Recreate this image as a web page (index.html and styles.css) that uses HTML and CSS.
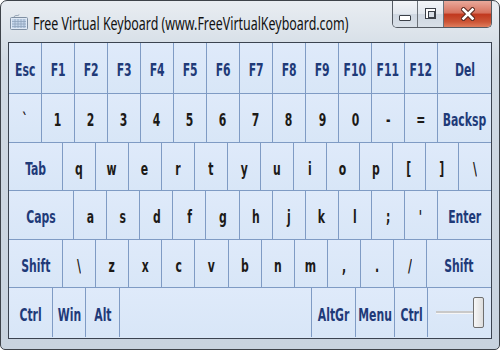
FILE: index.html
```html
<!DOCTYPE html>
<html>
<head>
<meta charset="utf-8">
<link rel="stylesheet" href="styles.css">
</head>
<body>
<div class="window">
  <div class="titlebar">
    <svg class="app-icon" width="18" height="16" viewBox="0 0 18 16">
      <rect x="0.5" y="3.5" width="17" height="12" rx="1" fill="#dfe9f5" stroke="#7f8fa3"/>
      <rect x="2" y="5" width="14" height="9" fill="#c4d5ea"/>
      <path d="M2 7.5h14M2 10h14M2 12.5h14M5 5v9M8 5v9M11 5v9M14 5v9" stroke="#8fa3bd" stroke-width="0.8"/>
      <path d="M4 3.5c0-2 2-2 3-2s2 0 2-1" fill="none" stroke="#7f8fa3" stroke-width="0.8"/>
    </svg>
    <div class="title"><span>Free Virtual Keyboard (www.FreeVirtualKeyboard.com)</span></div>
    <div class="caption">
      <div class="cbtn cmin"><div class="min-glyph"></div></div>
      <div class="cbtn cmax"><div class="max-glyph"></div></div>
      <div class="cbtn cclose">
        <svg width="14" height="14" viewBox="0 0 14 14">
          <path d="M2.5 2.5l9 9M11.5 2.5l-9 9" stroke="#5a2a20" stroke-width="4.6" stroke-linecap="square"/>
          <path d="M2.5 2.5l9 9M11.5 2.5l-9 9" stroke="#ffffff" stroke-width="2.6" stroke-linecap="square"/>
        </svg>
      </div>
    </div>
  </div>
  <div class="panel">
    <div class="row r1">
      <div class="k s"><span>Esc</span></div>
      <div class="k s"><span>F1</span></div>
      <div class="k s"><span>F2</span></div>
      <div class="k s"><span>F3</span></div>
      <div class="k s"><span>F4</span></div>
      <div class="k s"><span>F5</span></div>
      <div class="k s"><span>F6</span></div>
      <div class="k s"><span>F7</span></div>
      <div class="k s"><span>F8</span></div>
      <div class="k s"><span>F9</span></div>
      <div class="k s"><span>F10</span></div>
      <div class="k s"><span>F11</span></div>
      <div class="k s"><span>F12</span></div>
      <div class="k s g165"><span>Del</span></div>
    </div>
    <div class="row r2">
      <div class="k"><span>`</span></div>
      <div class="k"><span>1</span></div>
      <div class="k"><span>2</span></div>
      <div class="k"><span>3</span></div>
      <div class="k"><span>4</span></div>
      <div class="k"><span>5</span></div>
      <div class="k"><span>6</span></div>
      <div class="k"><span>7</span></div>
      <div class="k"><span>8</span></div>
      <div class="k"><span>9</span></div>
      <div class="k"><span>0</span></div>
      <div class="k"><span>-</span></div>
      <div class="k"><span>=</span></div>
      <div class="k s g165"><span>Backsp</span></div>
    </div>
    <div class="row r3">
      <div class="k s g165"><span>Tab</span></div>
      <div class="k"><span>q</span></div>
      <div class="k"><span>w</span></div>
      <div class="k"><span>e</span></div>
      <div class="k"><span>r</span></div>
      <div class="k"><span>t</span></div>
      <div class="k"><span>y</span></div>
      <div class="k"><span>u</span></div>
      <div class="k"><span>i</span></div>
      <div class="k"><span>o</span></div>
      <div class="k"><span>p</span></div>
      <div class="k"><span>[</span></div>
      <div class="k"><span>]</span></div>
      <div class="k"><span>\</span></div>
    </div>
    <div class="row r4">
      <div class="k s g200"><span>Caps</span></div>
      <div class="k"><span>a</span></div>
      <div class="k"><span>s</span></div>
      <div class="k"><span>d</span></div>
      <div class="k"><span>f</span></div>
      <div class="k"><span>g</span></div>
      <div class="k"><span>h</span></div>
      <div class="k"><span>j</span></div>
      <div class="k"><span>k</span></div>
      <div class="k"><span>l</span></div>
      <div class="k"><span>;</span></div>
      <div class="k"><span>'</span></div>
      <div class="k s g165"><span>Enter</span></div>
    </div>
    <div class="row r5">
      <div class="k s g165"><span>Shift</span></div>
      <div class="k"><span>\</span></div>
      <div class="k"><span>z</span></div>
      <div class="k"><span>x</span></div>
      <div class="k"><span>c</span></div>
      <div class="k"><span>v</span></div>
      <div class="k"><span>b</span></div>
      <div class="k"><span>n</span></div>
      <div class="k"><span>m</span></div>
      <div class="k"><span>,</span></div>
      <div class="k"><span>.</span></div>
      <div class="k"><span>/</span></div>
      <div class="k s g199"><span>Shift</span></div>
    </div>
    <div class="row r6">
      <div class="k s g134"><span>Ctrl</span></div>
      <div class="k s"><span>Win</span></div>
      <div class="k s"><span>Alt</span></div>
      <div class="k g595"></div>
      <div class="k s g131"><span>AltGr</span></div>
      <div class="k s g119"><span>Menu</span></div>
      <div class="k s"><span>Ctrl</span></div>
      <div class="k slider g170">
        <div class="track"></div>
        <div class="thumb"></div>
      </div>
    </div>
  </div>
</div>
</body>
</html>
```
FILE: styles.css
```css
* { box-sizing: border-box; }
html, body { margin: 0; padding: 0; }
body { width: 500px; height: 350px; overflow: hidden; background: #ffffff; }

.window {
  width: 500px;
  height: 350px;
  border: 1px solid #3e434a;
  border-radius: 7px 7px 5px 5px;
  background: linear-gradient(#e9edf2 0px, #dde4eb 30px, #d0d9e3 60px, #c8d3df 100%);
  padding: 0 7px 10px 7px;
  display: flex;
  flex-direction: column;
}

.titlebar {
  height: 41px;
  display: flex;
  align-items: flex-start;
  flex: 0 0 41px;
}
.app-icon { margin: 13px 0 0 2px; flex: 0 0 auto; }
.title {
  flex: 1 1 0;
  min-width: 0;
  white-space: nowrap;
  margin: 12px 0 0 5px;
  font-family: "Noto Sans", "DejaVu Sans", sans-serif;
  font-size: 18px;
  line-height: 20px;
  color: #111;
  transform: scaleX(0.69);
  transform-origin: 0 0;
}

.caption {
  flex: 0 0 auto;
  display: flex;
  height: 27px;
  border: 1px solid #555b63;
  border-top: none;
  border-radius: 0 0 5px 5px;
  overflow: hidden;
}
.cbtn {
  height: 26px;
  display: flex;
  align-items: center;
  justify-content: center;
}
.cmin { width: 25px; background: linear-gradient(#f3f5f8, #e2e7ee 50%, #cfd7e1 51%, #d9e0e8); border-right: 1px solid #6b7178; }
.cmax { width: 26px; background: linear-gradient(#f3f5f8, #e2e7ee 50%, #cfd7e1 51%, #d9e0e8); border-right: 1px solid #6b7178; }
.cclose { width: 47px; background: linear-gradient(#e9a99b, #d7735f 45%, #c1391f 52%, #cc5536 80%, #e07c5c); }
.min-glyph {
  width: 12px; height: 6px;
  margin-top: 8px;
  background: #fff;
  border: 1px solid #3b4048;
  border-radius: 1px;
}
.max-glyph {
  width: 11px; height: 11px;
  margin-top: -1px;
  border: 1px solid #3b4048;
  background: #fff;
  padding: 2px;
}
.max-glyph::after {
  content: "";
  display: block;
  width: 100%; height: 100%;
  border: 1px solid #3b4048;
  background: #d8dee6;
}

.panel {
  flex: 1 1 auto;
  border: 1px solid #3b4350;
  background: #dae7f7;
  display: flex;
  flex-direction: column;
}
.row {
  display: flex;
  border-bottom: 1px solid #7f9bc4;
}
.r1 { height: 51px; }
.r2 { height: 49px; }
.r3 { height: 48px; }
.r4 { height: 49px; }
.r5 { height: 48px; }
.r6 { height: 49px; border-bottom: none; }

.k {
  flex: 1 1 0;
  min-width: 0;
  border-right: 1px solid #7f9bc4;
  background: linear-gradient(#dfeafa, #d8e6f7);
  display: flex;
  align-items: center;
  justify-content: center;
  font-family: "DejaVu Sans Condensed", "DejaVu Sans", sans-serif;
  font-stretch: condensed;
  font-weight: bold;
  font-size: 18px;
  color: #1c1a17;
  padding-top: 3px;
}
.k:last-child { border-right: none; }
.k span {
  display: inline-block;
  transform: scaleX(0.67);
  white-space: nowrap;
}
.k.s { color: #1f3a78; }

.g119 { flex-grow: 1.19; }
.g131 { flex-grow: 1.31; }
.g134 { flex-grow: 1.34; }
.g165 { flex-grow: 1.65; }
.g170 { flex-grow: 1.70; }
.g199 { flex-grow: 1.99; }
.g200 { flex-grow: 2; }
.g595 { flex-grow: 5.95; }

.slider {
  justify-content: flex-start;
  padding: 0 0 0 8px;
}
.track {
  width: 38px;
  height: 3px;
  background: #c9c9c9;
  border-bottom: 1px solid #f6f6f6;
}
.thumb {
  width: 11px;
  height: 31px;
  margin-left: -1px;
  border: 1px solid #6f6f6f;
  border-radius: 2px;
  background: linear-gradient(90deg, #f7f7f7, #dedede);
}
```
